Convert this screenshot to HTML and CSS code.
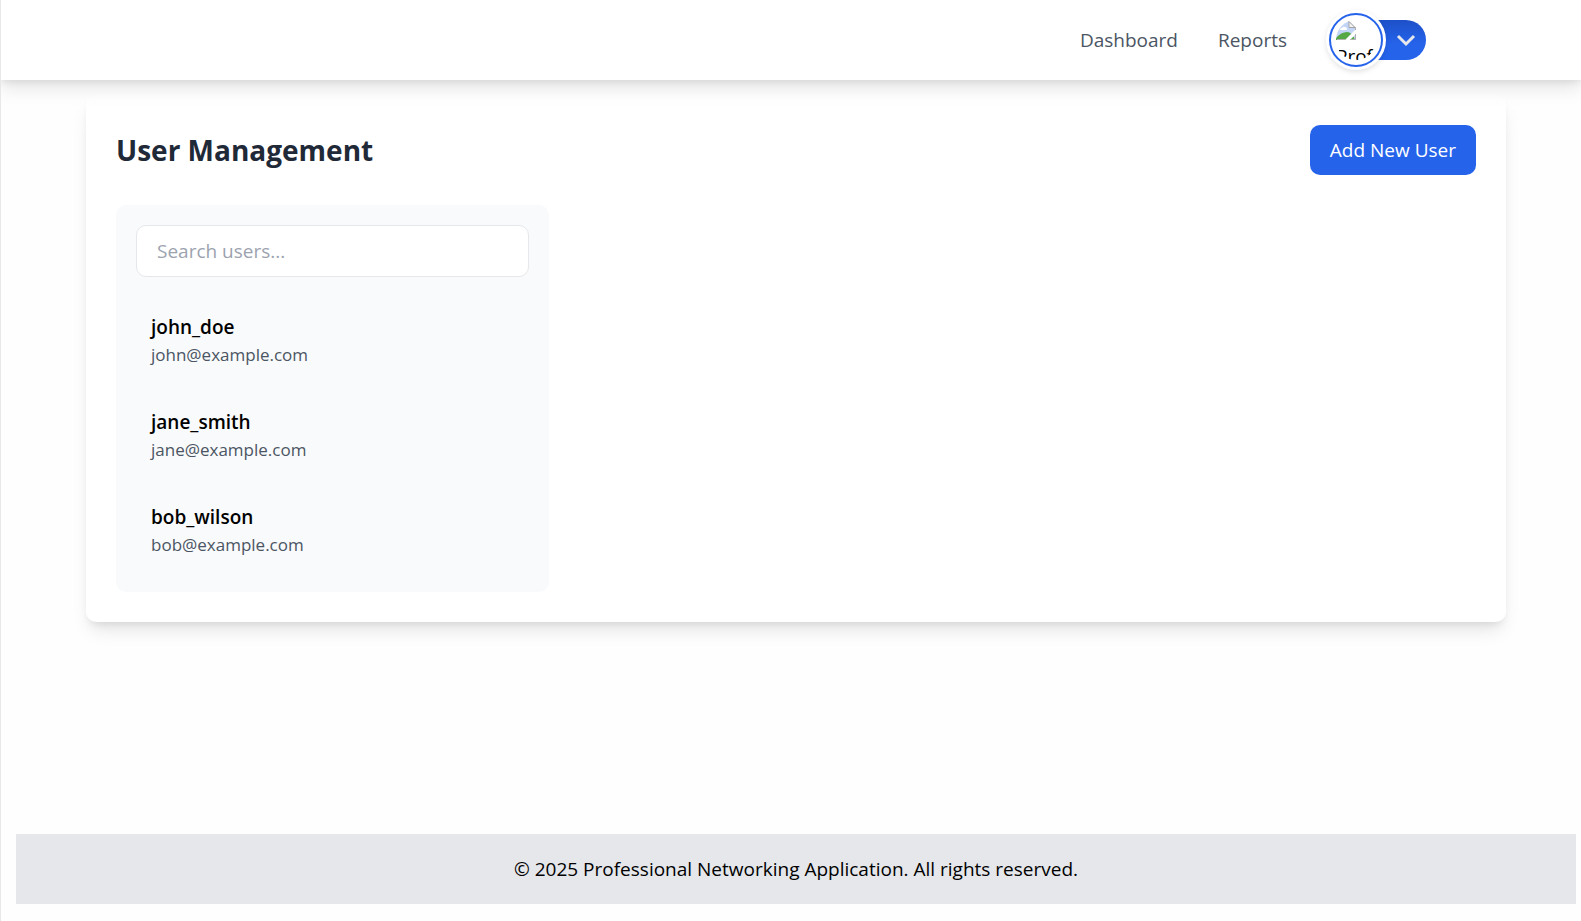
FILE: index.html
```html
<!DOCTYPE html>
<html lang="en">
<head>
<meta charset="utf-8">
<title>User Management</title>
<link rel="stylesheet" href="styles.css">
</head>
<body>
<header class="topbar">
  <nav class="nav">
    <a class="nav-link" href="#">Dashboard</a>
    <a class="nav-link" href="#">Reports</a>
  </nav>
  <button class="profile" type="button" aria-label="Open profile menu">
    <span class="avatar">
      <span class="photo">
        <svg class="photo-icon" viewBox="0 0 20 20" aria-hidden="true">
          <path d="M0 1h13l7 7v12H0z" fill="#c3d5f6"/>
          <path d="M4 10q0-2 2-2 1-2 3-1 2 0 2 3z" fill="#fff"/>
          <path d="M0 20v-2q5-6 11-6 5 0 8 8z" fill="#55a844"/>
          <path d="M20 9v5l-6 6H9z" fill="#fff"/>
          <path d="M1 19.500h8M19.500 14v5.500H15" fill="none" stroke="#b0b0b0"/>
          <path d="M13 1.500v6h6z" fill="#f4f4f4" stroke="#a3a3a3"/>
          <path d="M2 1.500h11M19.500 7v3" stroke="#b0b0b0"/>
        </svg>
        <span class="photo-alt">Profile</span>
      </span>
    </span>
    <svg class="chevron" viewBox="0 0 20 20" aria-hidden="true"><path d="M2 6l8 8 8-8" fill="none" stroke="#e5e7eb" stroke-width="3"/></svg>
  </button>
</header>
<main class="card">
  <div class="card-head">
    <h1 class="title">User Management</h1>
    <button class="add" type="button">Add New User</button>
  </div>
  <div class="columns">
    <section class="panel">
      <input class="search" type="text" placeholder="Search users..." aria-label="Search users">
      <ul class="users">
        <li class="user"><span class="name">john_doe</span><span class="email">john@example.com</span></li>
        <li class="user"><span class="name">jane_smith</span><span class="email">jane@example.com</span></li>
        <li class="user"><span class="name">bob_wilson</span><span class="email">bob@example.com</span></li>
      </ul>
    </section>
  </div>
</main>
<footer class="footer">© 2025 Professional Networking Application. All rights reserved.</footer>
</body>
</html>
```
FILE: styles.css
```css
* { box-sizing: border-box; }
body {
  margin: 0;
  min-height: 100vh;
  display: flex;
  flex-direction: column;
  border-left: 1px solid #e8e8e8;
  background: #fefefe;
  color: #000;
  font: 19px/30px "Open Sans", "Noto Sans", sans-serif;
}
button, input { font: inherit; }
.topbar {
  position: relative;
  z-index: 1;
  display: flex;
  justify-content: flex-end;
  align-items: center;
  gap: 42px;
  height: 80px;
  padding-right: 155px;
  background: #fff;
  box-shadow: 0 8px 18px rgba(0,0,0,.1), 0 1px 8px rgba(0,0,0,.1);
}
.nav { display: flex; gap: 40px; }
.nav-link { color: #4b5563; text-decoration: none; }
.profile {
  display: flex;
  align-items: center;
  justify-content: space-between;
  width: 97px;
  height: 40px;
  padding: 0 10px 0 0;
  border: 0;
  border-radius: 20px;
  background: linear-gradient(90deg, #fff 40px, transparent 40px), linear-gradient(#1d50c8, #2563eb 60%);
}
.avatar {
  flex: none;
  width: 54px;
  height: 54px;
  padding: 5px;
  border: 2px solid #2563eb;
  border-radius: 50%;
  background: #fff;
  box-shadow: 0 0 0 3px #fff, 0 2px 6px 2px rgba(0,0,0,.15);
}
.photo {
  display: block;
  width: 40px;
  height: 40px;
  overflow: hidden;
  border-radius: 50%;
  color: #000;
  text-align: left;
}
.photo-icon { display: block; width: 20px; height: 20px; }
.photo-alt { display: block; line-height: 32px; }
.chevron { width: 20px; height: 20px; }
.card {
  margin: 15px 75px 0 85px;
  padding: 30px;
  border-radius: 10px;
  background: #fff;
  box-shadow: 0 12px 18px -4px rgba(0,0,0,.1), 0 5px 8px -4px rgba(0,0,0,.1);
}
.card-head {
  display: flex;
  justify-content: space-between;
  align-items: center;
  margin-bottom: 30px;
}
.title { margin: 0; color: #1f2937; font-size: 28px; line-height: 40px; font-weight: 700; }
.add {
  padding: 10px 20px;
  border: 0;
  border-radius: 10px;
  background: #2563eb;
  color: #fff;
}
.columns {
  display: grid;
  grid-template-columns: repeat(3, 1fr);
  gap: 30px;
}
.panel {
  padding: 20px;
  border-radius: 10px;
  background: #f9fafb;
}
.search {
  display: block;
  width: 100%;
  height: 52px;
  padding: 10px 20px;
  border: 1px solid #e5e7eb;
  border-radius: 10px;
  background: #fff;
  color: #000;
}
.search::placeholder { color: #9ca3af; opacity: 1; }
.users {
  display: grid;
  gap: 10px;
  margin: 20px 0 0;
  padding: 0;
  list-style: none;
}
.user { display: grid; padding: 15px; }
.name { font-weight: 600; }
.email { color: #4b5563; font-size: 17px; line-height: 25px; }
.footer {
  margin: auto 5px 17px 15px;
  padding: 20px;
  background: #e5e7eb;
  text-align: center;
}
```
